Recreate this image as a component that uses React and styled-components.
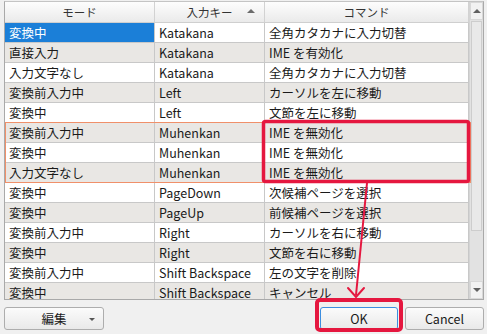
import React from 'react';
import styled, { createGlobalStyle } from 'styled-components';

const rows = [
  ['変換中', 'Katakana', '全角カタカナに入力切替'],
  ['直接入力', 'Katakana', 'IME を有効化'],
  ['入力文字なし', 'Katakana', '全角カタカナに入力切替'],
  ['変換前入力中', 'Left', 'カーソルを左に移動'],
  ['変換中', 'Left', '文節を左に移動'],
  ['変換前入力中', 'Muhenkan', 'IME を無効化'],
  ['変換中', 'Muhenkan', 'IME を無効化'],
  ['入力文字なし', 'Muhenkan', 'IME を無効化'],
  ['変換中', 'PageDown', '次候補ページを選択'],
  ['変換中', 'PageUp', '前候補ページを選択'],
  ['変換前入力中', 'Right', 'カーソルを右に移動'],
  ['変換中', 'Right', '文節を右に移動'],
  ['変換前入力中', 'Shift Backspace', '左の文字を削除'],
  ['変換中', 'Shift Backspace', 'キャンセル'],
];

const GlobalStyle = createGlobalStyle`
  html, body {
    margin: 0;
    padding: 0;
    background: #f0f0f0;
  }
  body {
    font-family: "Noto Sans CJK JP", "Noto Sans", sans-serif;
    font-size: 12px;
    color: #1a1a1a;
  }
`;

const Page = styled.div`
  position: relative;
  width: 487px;
  height: 334px;
  overflow: hidden;
  display: flex;
  flex-direction: column;
`;

const TableFrame = styled.div`
  margin: 1px 3px 0 4px;
  height: 297px;
  border: 1px solid #a9a9a9;
  border-top-color: #c4c4c4;
  display: flex;
  background: #fff;
  overflow: hidden;
`;

const Table = styled.div`
  position: relative;
  flex: 1;
  display: flex;
  flex-direction: column;
`;

const cols = '150px 110px 204px';

const HeaderRow = styled.div`
  display: grid;
  grid-template-columns: ${cols};
  height: 20px;
  background: linear-gradient(#fdfdfd, #eaeaea);
  border-bottom: 1px solid #cfcfcf;
`;

const HeaderCell = styled.div`
  position: relative;
  display: flex;
  align-items: center;
  justify-content: center;
  border-right: 1px solid #d2d2d2;
  color: #333;
  font-size: 11.5px;
  line-height: 20px;
`;

const SortArrow = styled.span`
  position: absolute;
  right: 9px;
  top: 7px;
  width: 0;
  height: 0;
  border-left: 4px solid transparent;
  border-right: 4px solid transparent;
  border-bottom: 4px solid #6b6b6b;
`;

const Row = styled.div`
  display: grid;
  grid-template-columns: ${cols};
  height: 19px;
  border-bottom: 1px solid #c8c8c8;
  background: ${(p) => (p.$alt ? '#e9e7e4' : '#ffffff')};
`;

const Cell = styled.div`
  padding-left: 4px;
  display: flex;
  align-items: center;
  white-space: nowrap;
  overflow: hidden;
  border-right: 1px solid #c8c8c8;
  line-height: 19px;
  font-size: 12.5px;
  background: ${(p) => (p.$selected ? '#1b7fd8' : 'transparent')};
  color: ${(p) => (p.$selected ? '#ffffff' : '#1a1a1a')};
`;

const FocusRect = styled.div`
  position: absolute;
  left: 0;
  top: 120px;
  width: 464px;
  height: 59px;
  border: 1px solid #f0906a;
  pointer-events: none;
`;

const ScrollBar = styled.div`
  width: 15px;
  display: flex;
  flex-direction: column;
  background: #e2e2e2;
  border-left: 1px solid #d4d4d4;
`;

const ScrollButton = styled.div`
  height: 16px;
  display: flex;
  align-items: center;
  justify-content: center;
  background: #f2f2f2;
  border: 1px solid #d8d8d8;

  &::after {
    content: '';
    width: 0;
    height: 0;
    border-left: 4px solid transparent;
    border-right: 4px solid transparent;
    ${(p) =>
      p.$down
        ? 'border-top: 4px solid #606060;'
        : 'border-bottom: 4px solid #606060;'}
  }
`;

const Thumb = styled.div`
  height: 208px;
  margin: 1px 1px 0 1px;
  background: #e9e9e9;
  border: 1px solid #cdcdcd;
`;

const Track = styled.div`
  flex: 1;
`;

const ButtonBar = styled.div`
  display: flex;
  align-items: center;
  padding: 7px 3px 0 4px;
`;

const Button = styled.button`
  height: 23px;
  width: ${(p) => p.$w}px;
  margin-left: ${(p) => p.$ml || 0}px;
  border: 1px solid ${(p) => (p.$default ? '#3c8ee0' : '#adadad')};
  border-radius: 3px;
  background: linear-gradient(#fbfbfb, #e9e9e9);
  font-family: inherit;
  font-size: 12.5px;
  color: #1a1a1a;
  display: flex;
  align-items: center;
  justify-content: center;
  position: relative;
  padding: 0;
`;

const DropArrow = styled.span`
  position: absolute;
  right: 8px;
  top: 10px;
  width: 0;
  height: 0;
  border-left: 3px solid transparent;
  border-right: 3px solid transparent;
  border-top: 3px solid #555;
`;

const Spacer = styled.div`
  flex: 1;
`;

const Annotation = styled.svg`
  position: absolute;
  left: 0;
  top: 0;
  pointer-events: none;
`;

export default function App() {
  return (
    <>
      <GlobalStyle />
      <Page>
        <TableFrame>
          <Table>
            <HeaderRow>
              <HeaderCell>モード</HeaderCell>
              <HeaderCell>
                入力キー
                <SortArrow />
              </HeaderCell>
              <HeaderCell>コマンド</HeaderCell>
            </HeaderRow>
            {rows.map((r, i) => (
              <Row key={i} $alt={i % 2 === 1}>
                <Cell $selected={i === 0}>{r[0]}</Cell>
                <Cell>{r[1]}</Cell>
                <Cell>{r[2]}</Cell>
              </Row>
            ))}
            <FocusRect />
          </Table>
          <ScrollBar>
            <ScrollButton />
            <Thumb />
            <Track />
            <ScrollButton $down />
          </ScrollBar>
        </TableFrame>
        <ButtonBar>
          <Button $w={100}>
            編集
            <DropArrow />
          </Button>
          <Spacer />
          <Button $w={78} $default>
            OK
          </Button>
          <Button $w={79} $ml={7}>
            Cancel
          </Button>
        </ButtonBar>
        <Annotation width="487" height="334" viewBox="0 0 487 334">
          <rect
            x="263.5"
            y="121.5"
            width="205"
            height="60"
            rx="2"
            fill="none"
            stroke="#e5173f"
            strokeWidth="3.5"
          />
          <path
            d="M367 183 L356 295"
            fill="none"
            stroke="#e5173f"
            strokeWidth="2"
          />
          <path
            d="M348 288 L356 297 L364 288"
            fill="none"
            stroke="#e5173f"
            strokeWidth="2"
            strokeLinecap="round"
          />
          <rect
            x="317"
            y="300"
            width="84"
            height="30"
            rx="3"
            fill="none"
            stroke="#e5173f"
            strokeWidth="4"
          />
        </Annotation>
      </Page>
    </>
  );
}
